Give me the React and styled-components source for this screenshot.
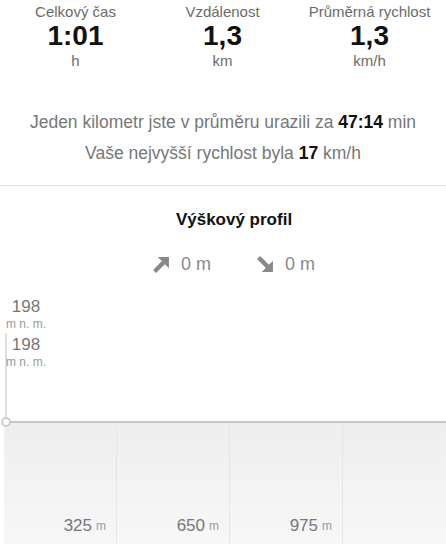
import React from 'react';
import styled, { createGlobalStyle } from 'styled-components';

const GlobalStyle = createGlobalStyle`
  html, body {
    margin: 0;
    padding: 0;
    background: #fff;
    font-family: "Liberation Sans", Arial, sans-serif;
  }
`;

const Page = styled.div`
  width: 446px;
  height: 548px;
  overflow: hidden;
`;

const Stats = styled.div`
  display: grid;
  grid-template-columns: repeat(3, 147px);
  padding: 3px 0 0 2px;
`;

const Stat = styled.div`
  display: flex;
  flex-direction: column;
  align-items: center;
  color: #6b6b6b;
  font-size: 15px;
  line-height: 17px;

  strong {
    color: #111;
    font-size: 28px;
    line-height: 32px;
  }
`;

const Summary = styled.div`
  margin: 38px 0 16px;
  text-align: center;
  color: #777;
  font-size: 17.5px;
  line-height: 31px;

  b {
    color: #111;
  }
`;

const Divider = styled.hr`
  margin: 0;
  border: 0;
  height: 1px;
  background: #e6e6e6;
`;

const ProfileHead = styled.div`
  padding-left: 22px;
  text-align: center;
`;

const Title = styled.h3`
  margin: 24px 0 0;
  font-size: 17px;
  line-height: 20px;
  color: #111;
`;

const Deltas = styled.div`
  margin-top: 22px;
  display: flex;
  justify-content: center;
  gap: 46px;
`;

const Delta = styled.div`
  display: flex;
  align-items: center;
  gap: 11px;
  color: #888;
  font-size: 18px;
  line-height: 24px;
`;

const Chart = styled.div`
  margin-top: 19px;
`;

const Plot = styled.div`
  position: relative;
  height: 126px;
`;

const AxisLine = styled.div`
  position: absolute;
  left: 5px;
  top: 38px;
  bottom: 0;
  width: 2px;
  background: #dedede;
`;

const YLabels = styled.div`
  position: relative;
  width: 44px;
  margin-left: 4px;
  padding-top: 2px;
  text-align: center;
  color: #777;
`;

const YValue = styled.div`
  font-size: 17px;
  line-height: 20px;
`;

const YUnit = styled.div`
  font-size: 12px;
  line-height: 14px;
  margin-bottom: 4px;
  color: #999;
`;

const Baseline = styled.div`
  position: relative;
  height: 2px;
  background: #c6c6c6;
  margin-left: 6px;

  &::before {
    content: '';
    position: absolute;
    left: -5px;
    top: -4px;
    width: 6px;
    height: 6px;
    border-radius: 50%;
    border: 2px solid #ccc;
    background: #fff;
  }
`;

const Band = styled.div`
  display: grid;
  grid-template-columns: repeat(4, 113px);
  margin-left: 4px;
  height: 121px;
  background: linear-gradient(#eeeeee, #f7f7f7);
  overflow: hidden;
`;

const Column = styled.div`
  display: flex;
  align-items: flex-end;
  justify-content: flex-end;
  padding: 0 10px 8px 0;
  border-right: 1px solid #e6e6e6;
  color: #777;
  font-size: 17px;
  line-height: 20px;

  small {
    margin-left: 4px;
    font-size: 12px;
    color: #999;
  }
`;

const Arrow = ({ down }) => (
  <svg width="17" height="17" viewBox="0 0 16 16" style={down ? { transform: 'rotate(90deg)' } : undefined}>
    <line x1="1.5" y1="14.5" x2="10" y2="6" stroke="#888" strokeWidth="4" />
    <polygon points="4.5,1 15,1 15,11.5" fill="#888" />
  </svg>
);

const stats = [
  { label: 'Celkový čas', value: '1:01', unit: 'h' },
  { label: 'Vzdálenost', value: '1,3', unit: 'km' },
  { label: 'Průměrná rychlost', value: '1,3', unit: 'km/h' },
];

const ticks = [325, 650, 975, null];

export default function App() {
  return (
    <Page>
      <GlobalStyle />
      <Stats>
        {stats.map((s) => (
          <Stat key={s.label}>
            <span>{s.label}</span>
            <strong>{s.value}</strong>
            <span>{s.unit}</span>
          </Stat>
        ))}
      </Stats>

      <Summary>
        <div>Jeden kilometr jste v průměru urazili za <b>47:14</b> min</div>
        <div>Vaše nejvyšší rychlost byla <b>17</b> km/h</div>
      </Summary>

      <Divider />

      <ProfileHead>
        <Title>Výškový profil</Title>
        <Deltas>
          <Delta><Arrow /> 0 m</Delta>
          <Delta><Arrow down /> 0 m</Delta>
        </Deltas>
      </ProfileHead>

      <Chart>
        <Plot>
          <AxisLine />
          <YLabels>
            <YValue>198</YValue>
            <YUnit>m n. m.</YUnit>
            <YValue>198</YValue>
            <YUnit>m n. m.</YUnit>
          </YLabels>
        </Plot>
        <Baseline />
        <Band>
          {ticks.map((t, i) => (
            <Column key={i}>
              {t && <>{t}<small>m</small></>}
            </Column>
          ))}
        </Band>
      </Chart>
    </Page>
  );
}
